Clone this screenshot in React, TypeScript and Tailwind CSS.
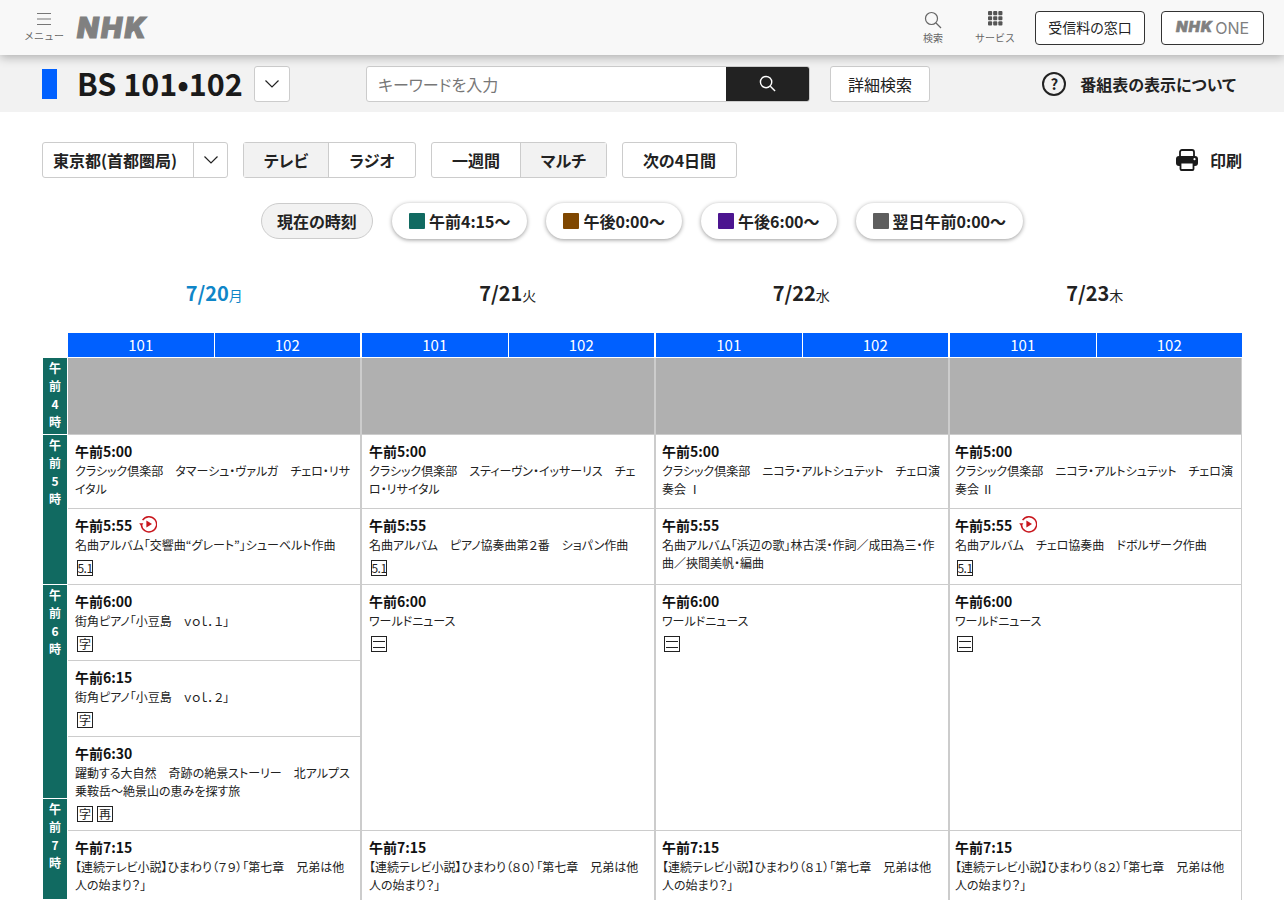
type Program = { time: string; desc: string; h: string; tags?: string[]; replay?: boolean }
type Day = { date: string; week: string; today?: boolean; pad: string; programs: Program[] }

const classic = 'クラシック倶楽部　'
const asadora = (n: string) => `【連続テレビ小説】ひまわり（${n}）「第七章　兄弟は他人の始まり？」`

const days: Day[] = [
  {
    date: '7/20', week: '月', today: true, pad: 'pl-[7px]',
    programs: [
      { time: '午前5:00', desc: classic + 'タマーシュ・ヴァルガ　チェロ・リサイタル', h: 'h-[74px]' },
      { time: '午前5:55', desc: '名曲アルバム「交響曲“グレート”」シューベルト作曲', h: 'h-[76px]', tags: ['5.1'], replay: true },
      { time: '午前6:00', desc: '街角ピアノ「小豆島　ｖｏｌ．１」', h: 'h-[76px]', tags: ['字'] },
      { time: '午前6:15', desc: '街角ピアノ「小豆島　ｖｏｌ．２」', h: 'h-[76px]', tags: ['字'] },
      { time: '午前6:30', desc: '躍動する大自然　奇跡の絶景ストーリー　北アルプス　乗鞍岳〜絶景山の恵みを探す旅', h: 'h-[94px]', tags: ['字', '再'] },
      { time: '午前7:15', desc: asadora('７９'), h: 'h-[100px]' },
    ],
  },
  {
    date: '7/21', week: '火', pad: 'pl-[7px]',
    programs: [
      { time: '午前5:00', desc: classic + 'スティーヴン・イッサーリス　チェロ・リサイタル', h: 'h-[74px]' },
      { time: '午前5:55', desc: '名曲アルバム　ピアノ協奏曲第２番　ショパン作曲', h: 'h-[76px]', tags: ['5.1'] },
      { time: '午前6:00', desc: 'ワールドニュース', h: 'h-[246px]', tags: ['二'] },
      { time: '午前7:15', desc: asadora('８０'), h: 'h-[100px]' },
    ],
  },
  {
    date: '7/22', week: '水', pad: 'pl-[6px]',
    programs: [
      { time: '午前5:00', desc: classic + 'ニコラ・アルトシュテット　チェロ演奏会 Ⅰ', h: 'h-[74px]' },
      { time: '午前5:55', desc: '名曲アルバム「浜辺の歌」林古渓・作詞／成田為三・作曲／挾間美帆・編曲', h: 'h-[76px]' },
      { time: '午前6:00', desc: 'ワールドニュース', h: 'h-[246px]', tags: ['二'] },
      { time: '午前7:15', desc: asadora('８１'), h: 'h-[100px]' },
    ],
  },
  {
    date: '7/23', week: '木', pad: 'pl-[5px]',
    programs: [
      { time: '午前5:00', desc: classic + 'ニコラ・アルトシュテット　チェロ演奏会 Ⅱ', h: 'h-[74px]' },
      { time: '午前5:55', desc: '名曲アルバム　チェロ協奏曲　ドボルザーク作曲', h: 'h-[76px]', tags: ['5.1'], replay: true },
      { time: '午前6:00', desc: 'ワールドニュース', h: 'h-[246px]', tags: ['二'] },
      { time: '午前7:15', desc: asadora('８２'), h: 'h-[100px]' },
    ],
  },
]

const hours = [
  { label: '4', h: 'h-[77px]' },
  { label: '5', h: 'h-[150px]' },
  { label: '6', h: 'h-[214px]' },
  { label: '7', h: 'h-[101px]' },
]

const jumps = [
  { label: '午前4:15〜', color: 'bg-[#116a61]' },
  { label: '午後0:00〜', color: 'bg-[#7f4700]' },
  { label: '午後6:00〜', color: 'bg-[#4c1590]' },
  { label: '翌日午前0:00〜', color: 'bg-[#5e5e5e]' },
]

function Chevron() {
  return (
    <svg width="16" height="10" viewBox="0 0 16 10" fill="none" stroke="#222" strokeWidth="1.2">
      <path d="M1.5 1.5 8 8l6.5-6.5" />
    </svg>
  )
}

function ReplayIcon() {
  return (
    <svg width="18" height="18" viewBox="0 0 18 18" fill="none" className="-mt-[2px] ml-[7px]">
      <path d="M3.6 5.2A7.6 7.6 0 1 1 2.4 9.6" stroke="#c8161d" strokeWidth="1.4" />
      <path d="M0.2 8.2h4.2L2.4 11.2z" fill="#c8161d" />
      <path d="M7.4 5.6v6.8L13 9z" fill="#c8161d" />
    </svg>
  )
}

function PrintIcon() {
  return (
    <svg width="22" height="22" viewBox="0 0 22 22">
      <rect x="4" y="1" width="14" height="8" rx="2" fill="#fff" stroke="#1a1a1a" strokeWidth="1.8" />
      <rect x="0" y="7" width="22" height="10" rx="3" fill="#1a1a1a" />
      <rect x="4.5" y="13.5" width="13" height="7.5" rx="1" fill="#fff" stroke="#1a1a1a" strokeWidth="1.8" />
      <circle cx="18.5" cy="10.2" r="1.1" fill="#fff" />
    </svg>
  )
}

function Tag({ name }: { name: string }) {
  if (name === '二') {
    return (
      <span className="flex h-[16px] w-[16px] flex-col items-center justify-center gap-[5px] border border-[#222]">
        <span className="h-px w-[12px] bg-[#222]" />
        <span className="h-px w-[12px] bg-[#222]" />
      </span>
    )
  }
  return (
    <span className={`flex h-[16px] w-[16px] items-center justify-center border border-[#222] text-[12px] leading-none text-[#222] ${name === '5.1' ? 'tracking-[-0.5px]' : ''}`}>
      {name}
    </span>
  )
}

function ProgramCell({ p, pad, last }: { p: Program; pad: string; last: boolean }) {
  return (
    <div className={`${p.h} ${pad} ${last ? '' : 'border-b border-[#ccc]'} pr-[6px] pt-[6px]`}>
      <div className="flex h-[20px] items-center text-[14px] font-bold leading-[20px] text-[#111]">
        {p.time}
        {p.replay && <ReplayIcon />}
      </div>
      <p className="mt-px text-[12px] leading-[18px] text-[#222]">{p.desc}</p>
      {p.tags && (
        <div className="ml-[2px] mt-[6px] flex gap-[4px]">
          {p.tags.map(t => <Tag key={t} name={t} />)}
        </div>
      )}
    </div>
  )
}

export default function App() {
  return (
    <div className="h-[900px] overflow-hidden bg-white text-[#222] [font-family:'Noto_Sans_CJK_JP','Noto_Sans',sans-serif] [font-feature-settings:'palt']">
      <header className="relative z-10 flex h-[55px] items-center justify-between bg-[#f8f8f8] pl-[24px] pr-[20px] shadow-[0_2px_10px_rgba(0,0,0,0.3)]">
        <div className="flex items-center">
          <button className="flex w-[40px] flex-col items-center text-[#666]">
            <svg width="16" height="14" viewBox="0 0 16 14" stroke="#777" strokeWidth="1.2">
              <path d="M1 1.5h14M1 7h14M1 12.5h14" />
            </svg>
            <span className="mt-[3px] text-[10px] leading-[14px] [font-feature-settings:normal]">メニュー</span>
          </button>
          <span className="ml-[13px] text-[28px] font-black italic leading-none tracking-[2.5px] text-[#808080] [-webkit-text-stroke:1px_#808080] [font-family:Inter,sans-serif]">NHK</span>
        </div>
        <div className="flex items-center">
          <button className="flex w-[40px] flex-col items-center text-[#666]">
            <svg width="18" height="18" viewBox="0 0 18 18" fill="none" stroke="#666" strokeWidth="1.2">
              <circle cx="7.5" cy="7.5" r="6" />
              <path d="m12 12 5 5" />
            </svg>
            <span className="mt-[2px] text-[10px] leading-[14px] [font-feature-settings:normal]">検索</span>
          </button>
          <button className="ml-[22px] flex w-[40px] flex-col items-center text-[#666]">
            <svg width="15" height="15" viewBox="0 0 16 16" fill="#555">
              {[0, 5.5, 11].flatMap(y => [0, 5.5, 11].map(x => (
                <rect key={`${x}-${y}`} x={x} y={y} width="4.4" height="4.4" rx="1" />
              )))}
            </svg>
            <span className="mt-[5px] text-[10px] leading-[14px] [font-feature-settings:normal]">サービス</span>
          </button>
          <a className="ml-[20px] flex h-[34px] w-[110px] items-center justify-center rounded-[4px] border border-[#333] bg-white text-[14px] text-[#222]">受信料の窓口</a>
          <a className="ml-[16px] flex h-[34px] w-[103px] items-center justify-center gap-[2px] rounded-[4px] border border-[#333] bg-white text-[#808080]">
            <span className="text-[15px] font-black italic tracking-[1px] [-webkit-text-stroke:0.5px_#808080] [font-family:Inter,sans-serif]">NHK</span>
            <span className="text-[16px] [font-family:Inter,sans-serif]">ONE</span>
          </a>
        </div>
      </header>

      <div className="flex h-[57px] items-center bg-[#f2f2f2] pl-[42px] pr-[48px]">
        <span className="h-[30px] w-[15px] bg-[#0060ff]" />
        <h1 className="ml-[20px] w-[167px] whitespace-nowrap text-[30.5px] font-bold leading-none text-[#1a1a1a]">BS 101•102</h1>
        <button className="ml-[10px] flex h-[36px] w-[36px] items-center justify-center rounded-[3px] border border-[#ccc] bg-white">
          <Chevron />
        </button>
        <div className="ml-[76px] flex h-[36px] w-[444px] overflow-hidden rounded-[3px] border border-[#ccc] bg-white">
          <span className="flex flex-1 items-center pl-[11px] text-[16px] text-[#777]">キーワードを入力</span>
          <span className="flex w-[83px] items-center justify-center bg-[#222]">
            <svg width="17" height="17" viewBox="0 0 18 18" fill="none" stroke="#fff" strokeWidth="1.5">
              <circle cx="7.5" cy="7.5" r="6" />
              <path d="m12 12 5 5" />
            </svg>
          </span>
        </div>
        <button className="ml-[20px] flex h-[36px] w-[100px] items-center justify-center rounded-[3px] border border-[#ccc] bg-white text-[16px]">詳細検索</button>
        <div className="ml-auto flex items-center">
          <span className="flex h-[24px] w-[24px] items-center justify-center rounded-full border-2 border-[#222] text-[15px] font-bold leading-none">?</span>
          <span className="ml-[14px] text-[16px] font-bold text-[#222]">番組表の表示について</span>
        </div>
      </div>

      <main className="px-[42px]">
        <div className="mt-[30px] flex h-[36px] items-center text-[16px] font-bold">
          <div className="flex h-[36px] w-[186px] items-center rounded-[3px] border border-[#ccc]">
            <span className="w-[150px] pl-[10px]">東京都(首都圏局)</span>
            <span className="flex h-full flex-1 items-center justify-center border-l border-[#ccc]"><Chevron /></span>
          </div>
          <div className="ml-[15px] flex h-[36px] w-[173px] rounded-[3px] border border-[#ccc]">
            <span className="flex w-[85px] items-center justify-center border-r border-[#ccc] bg-[#f2f2f2]">テレビ</span>
            <span className="flex flex-1 items-center justify-center">ラジオ</span>
          </div>
          <div className="ml-[15px] flex h-[36px] w-[176px] rounded-[3px] border border-[#ccc]">
            <span className="flex w-[89px] items-center justify-center border-r border-[#ccc]">一週間</span>
            <span className="flex flex-1 items-center justify-center bg-[#f2f2f2]">マルチ</span>
          </div>
          <div className="ml-[15px] flex h-[36px] w-[115px] items-center justify-center rounded-[3px] border border-[#ccc]">次の4日間</div>
          <div className="ml-auto flex items-center">
            <PrintIcon />
            <span className="ml-[12px]">印刷</span>
          </div>
        </div>

        <div className="mt-[25px] flex h-[36px] justify-center gap-[19px] text-[16px] font-bold">
          <span className="flex w-[112px] items-center justify-center rounded-full border border-[#ccc] bg-[#f2f2f2]">現在の時刻</span>
          {jumps.map(j => (
            <span key={j.label} className="flex items-center gap-[4px] rounded-full bg-white px-[17px] shadow-[0_1px_4px_rgba(0,0,0,0.4)]">
              <span className={`h-[16px] w-[16px] rounded-[1px] ${j.color}`} />
              {j.label}
            </span>
          ))}
        </div>

        <div className="ml-[26px] mt-[37px] flex h-[34px]">
          {days.map(d => (
            <div key={d.date} className={`flex w-[293.67px] items-baseline justify-center pr-[1px] ${d.today ? 'text-[#0f86c8]' : 'text-[#222]'}`}>
              <span className="text-[20px] font-bold leading-[34px]">{d.date}</span>
              <span className="text-[14px]">{d.week}</span>
            </div>
          ))}
        </div>

        <div className="ml-[26px] mt-[23px] flex">
          {days.map((d, i) => (
            <div key={d.date} className={`flex h-[24px] ${i === 3 ? 'w-[292px]' : 'w-[294px] border-r-2 border-white'} bg-[#0060ff] text-[15px] leading-[24px] text-white`}>
              <span className="flex-1 border-r border-white text-center">101</span>
              <span className="flex-1 text-center">102</span>
            </div>
          ))}
        </div>

        <div className="mt-px flex">
          <div className="ml-px w-[24px] shrink-0">
            {hours.map(h => (
              <div key={h.label} className={`${h.h} flex flex-col items-center border-b border-white bg-[#116a61] pt-px text-[12px] font-bold leading-[18px] text-white`}>
                <span>午</span>
                <span>前</span>
                <span>{h.label}</span>
                <span>時</span>
              </div>
            ))}
          </div>
          <div className="ml-px flex">
            {days.map((d, i) => (
              <div key={d.date} className={i === 3 ? 'w-[292px] border-r border-[#ccc]' : 'w-[294px] border-r-2 border-[#ccc]'}>
                <div className="h-[77px] border-b border-[#ccc] bg-[#b0b0b0]" />
                {d.programs.map((p, j) => (
                  <ProgramCell key={p.time} p={p} pad={d.pad} last={j === d.programs.length - 1} />
                ))}
              </div>
            ))}
          </div>
        </div>
      </main>
    </div>
  )
}
